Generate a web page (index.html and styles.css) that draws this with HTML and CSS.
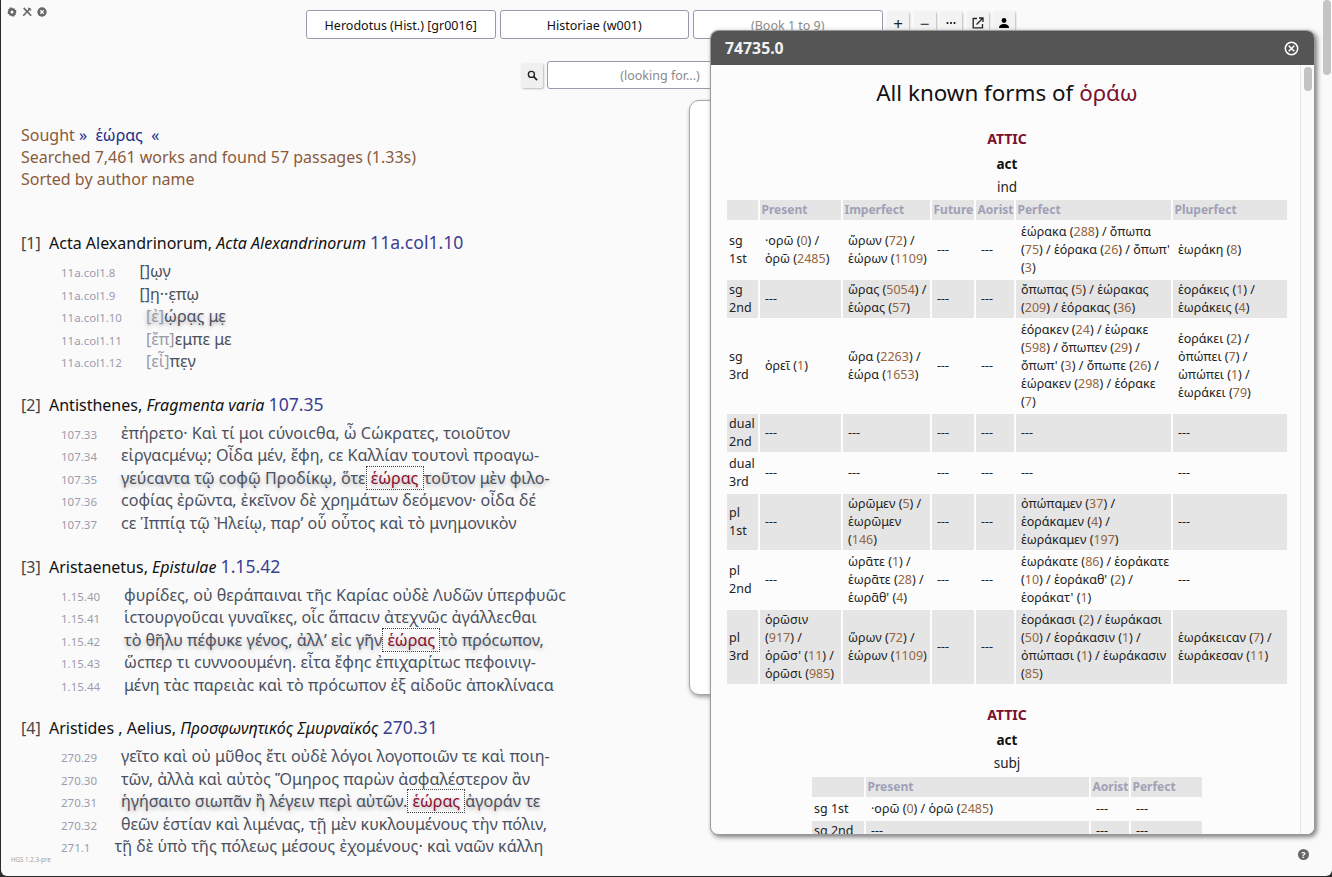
FILE: index.html
```html
<!DOCTYPE html>
<html lang="en">
<head>
    <meta charset="UTF-8">
    <meta name="viewport" content="width=device-width, initial-scale=1.0">
    <title>Hipparchia</title>
    <link rel="stylesheet" href="styles.css">
</head>
<body>
<div class="page">
    <div class="corner-icons">
        <svg viewBox="0 0 12 12" width="10" height="10"><path d="M6 0.5l1.2 1.4 1.8-.5.5 1.8 1.8.6-.5 1.8L11.5 6l-1.2 1.4.5 1.8-1.8.6-.5 1.8-1.8-.5L6 11.5l-1.2-1.4-1.8.5-.5-1.8-1.8-.6.5-1.8L.5 6l1.2-1.4-.5-1.8 1.8-.6.5-1.8 1.8.5z" fill="#666"/><circle cx="6" cy="6" r="1.8" fill="#fafafa"/></svg>
        <svg viewBox="0 0 12 12" width="10" height="10"><path d="M2 1l9 9.5M10 1.5L1.5 10.5" stroke="#666" stroke-width="2" fill="none"/><path d="M8 .5l3.5 3-1.5 1-3-3z" fill="#666"/></svg>
        <svg viewBox="0 0 12 12" width="10" height="10"><circle cx="6" cy="6" r="5.6" fill="#666"/><path d="M4 4l4 4M8 4l-4 4" stroke="#fafafa" stroke-width="1.6"/></svg>
    </div>

    <div class="topbar">
        <div class="picker">Herodotus (Hist.) [gr0016]</div>
        <div class="picker">Historiae (w001)</div>
        <div class="picker muted">(Book 1 to 9)</div>
        <div class="tools">
            <div class="tool">+</div>
            <div class="tool">&minus;</div>
            <div class="tool"><svg viewBox="0 0 12 12" width="12" height="12"><circle cx="2.5" cy="6" r="1"/><circle cx="6" cy="6" r="1"/><circle cx="9.5" cy="6" r="1"/></svg></div>
            <div class="tool"><svg viewBox="0 0 12 12" width="12" height="12"><path d="M5 1.5H1.2v9.3h9.3V7" fill="none" stroke="#222" stroke-width="1.3"/><path d="M4.5 7.5L10.5 1.5M7 1h4v4" fill="none" stroke="#222" stroke-width="1.3"/></svg></div>
            <div class="tool"><svg viewBox="0 0 12 12" width="12" height="12"><circle cx="6" cy="3.5" r="2.4"/><path d="M1 11c0-3 2.5-4 5-4s5 1 5 4z"/></svg></div>
        </div>
    </div>

    <div class="searchbar">
        <div class="search-btn"><svg viewBox="0 0 12 12" width="11" height="11"><circle cx="4.8" cy="4.8" r="3.3" fill="none" stroke="#222" stroke-width="1.5"/><path d="M7.3 7.3l3.7 3.7" stroke="#222" stroke-width="1.8"/></svg></div>
        <div class="search-input">(looking for...)</div>
    </div>

    <div class="summary">
        <div>Sought <span class="sought">&raquo;&nbsp; ἑώρας &nbsp;&laquo;</span></div>
        <div>Searched 7,461 works and found 57 passages (1.33s)</div>
        <div>Sorted by author name</div>
    </div>

    <div class="results">
        <div class="entry">
            <div class="entry-head"><span class="idx">[1]</span>Acta Alexandrinorum, <i>Acta Alexandrinorum</i> <span class="cite">11a.col1.10</span></div>
            <div class="line"><span class="num">11a.col1.8</span>[]ω̣ν̣</div>
            <div class="line"><span class="num">11a.col1.9</span>[]η̣··ε̣πω̣</div>
            <div class="line focus"><span class="num">11a.col1.10</span><span class="lost">[ἐ]</span>ώ̣ρα̣ς̣ με̣</div>
            <div class="line"><span class="num">11a.col1.11</span><span class="lost">[ἔπ]</span>εμπε με</div>
            <div class="line"><span class="num">11a.col1.12</span><span class="lost">[εἶ]</span>πε̣ν̣</div>
        </div>
        <div class="entry">
            <div class="entry-head"><span class="idx">[2]</span>Antisthenes, <i>Fragmenta varia</i> <span class="cite">107.35</span></div>
            <div class="line"><span class="num">107.33</span>ἐπήρετο· Καὶ τί μοι ϲύνοιϲθα, ὦ Ϲώκρατες, τοιοῦτον</div>
            <div class="line"><span class="num">107.34</span>εἰργαϲμένῳ; Οἶδα μέν, ἔφη, ϲε Καλλίαν τουτονὶ προαγω-</div>
            <div class="line focus"><span class="num">107.35</span>γεύϲαντα τῷ ϲοφῷ Προδίκῳ, ὅτε<span class="hit"> ἑώρας </span>τοῦτον μὲν φιλο-</div>
            <div class="line"><span class="num">107.36</span>ϲοφίας ἐρῶντα, ἐκεῖνον δὲ χρημάτων δεόμενον· οἶδα δέ</div>
            <div class="line"><span class="num">107.37</span>ϲε Ἱππίᾳ τῷ Ἠλείῳ, παρ’ οὗ οὗτος καὶ τὸ μνημονικὸν</div>
        </div>
        <div class="entry">
            <div class="entry-head"><span class="idx">[3]</span>Aristaenetus, <i>Epistulae</i> <span class="cite">1.15.42</span></div>
            <div class="line"><span class="num">1.15.40</span>φυρίδες, οὐ θεράπαιναι τῆϲ Καρίαϲ οὐδὲ Λυδῶν ὑπερφυῶϲ</div>
            <div class="line"><span class="num">1.15.41</span>ἱϲτουργοῦϲαι γυναῖκες, οἷϲ ἅπαϲιν ἀτεχνῶϲ ἀγάλλεϲθαι</div>
            <div class="line focus"><span class="num">1.15.42</span>τὸ θῆλυ πέφυκε γένος, ἀλλ’ εἰϲ γῆν<span class="hit"> ἑώρας </span>τὸ πρόϲωπον,</div>
            <div class="line"><span class="num">1.15.43</span>ὥϲπερ τι ϲυννοουμένη. εἶτα ἔφηϲ ἐπιχαρίτωϲ πεφοινιγ-</div>
            <div class="line"><span class="num">1.15.44</span>μένη τὰϲ παρειὰϲ καὶ τὸ πρόϲωπον ἐξ αἰδοῦϲ ἀποκλίναϲα</div>
        </div>
        <div class="entry">
            <div class="entry-head"><span class="idx">[4]</span>Aristides , Aelius, <i>Προσφωνητικός Σμυρναϊκός</i> <span class="cite">270.31</span></div>
            <div class="line"><span class="num">270.29</span>γεῖτο καὶ οὐ μῦθος ἔτι οὐδὲ λόγοι λογοποιῶν τε καὶ ποιη-</div>
            <div class="line"><span class="num">270.30</span>τῶν, ἀλλὰ καὶ αὐτὸς Ὅμηρος παρὼν ἀσφαλέστερον ἂν</div>
            <div class="line focus"><span class="num">270.31</span>ἡγήσαιτο σιωπᾶν ἢ λέγειν περὶ αὐτῶν.<span class="hit"> ἑώρας </span>ἀγοράν τε</div>
            <div class="line"><span class="num">270.32</span>θεῶν ἑστίαν καὶ λιμένας, τῇ μὲν κυκλουμένους τὴν πόλιν,</div>
            <div class="line"><span class="num">271.1</span>τῇ δὲ ὑπὸ τῆς πόλεως μέσους ἐχομένους· καὶ ναῶν κάλλη</div>
        </div>
    </div>

    <div class="version">HGS 1.2.3-pre</div>
    <div class="help">?</div>
    <div class="scroll-thumb"></div>
    <div class="back-panel"></div>

    <div class="dialog">
        <div class="dialog-head">
            <span>74735.0</span>
            <svg viewBox="0 0 16 16" width="15" height="15"><circle cx="8" cy="8" r="6.6" fill="none" stroke="#fff" stroke-width="1.6"/><path d="M5 5l6 6M11 5l-6 6" stroke="#fff" stroke-width="1.6"/></svg>
        </div>
        <div class="dialog-body">
            <div class="forms-title">All known forms of <span class="lemma">ὁράω</span></div>

            <div class="dialect">ATTIC</div>
            <div class="voice">act</div>
            <div class="mood">ind</div>
            <table class="forms wide">
                <colgroup><col class="c-a"><col class="c-b"><col class="c-c"><col class="c-d"><col class="c-e"><col class="c-f"><col class="c-g"></colgroup>
                <tr class="alt"><th></th><th>Present</th><th>Imperfect</th><th>Future</th><th>Aorist</th><th>Perfect</th><th>Pluperfect</th></tr>
                <tr><td class="pers">sg 1st</td><td>·ορῶ (<b>0</b>) / ὁρῶ (<b>2485</b>)</td><td>ὥρων (<b>72</b>) / ἑώρων (<b>1109</b>)</td><td>---</td><td>---</td><td>ἑώρακα (<b>288</b>) / ὄπωπα (<b>75</b>) / ἑόρακα (<b>26</b>) / ὄπωπ' (<b>3</b>)</td><td>ἑωράκη (<b>8</b>)</td></tr>
                <tr class="alt"><td class="pers">sg 2nd</td><td>---</td><td>ὥρας (<b>5054</b>) / ἑώρας (<b>57</b>)</td><td>---</td><td>---</td><td>ὄπωπας (<b>5</b>) / ἑώρακας (<b>209</b>) / ἑόρακας (<b>36</b>)</td><td>ἑοράκεις (<b>1</b>) / ἑωράκεις (<b>4</b>)</td></tr>
                <tr><td class="pers">sg 3rd</td><td>ὁρεῖ (<b>1</b>)</td><td>ὥρα (<b>2263</b>) / ἑώρα (<b>1653</b>)</td><td>---</td><td>---</td><td>ἑόρακεν (<b>24</b>) / ἑώρακε (<b>598</b>) / ὄπωπεν (<b>29</b>) / ὄπωπ' (<b>3</b>) / ὄπωπε (<b>26</b>) / ἑώρακεν (<b>298</b>) / ἑόρακε (<b>7</b>)</td><td>ἑοράκει (<b>2</b>) / ὀπώπει (<b>7</b>) / ὠπώπει (<b>1</b>) / ἑωράκει (<b>79</b>)</td></tr>
                <tr class="alt"><td class="pers">dual 2nd</td><td>---</td><td>---</td><td>---</td><td>---</td><td>---</td><td>---</td></tr>
                <tr><td class="pers">dual 3rd</td><td>---</td><td>---</td><td>---</td><td>---</td><td>---</td><td>---</td></tr>
                <tr class="alt"><td class="pers">pl 1st</td><td>---</td><td>ὡρῶμεν (<b>5</b>) / ἑωρῶμεν (<b>146</b>)</td><td>---</td><td>---</td><td>ὀπώπαμεν (<b>37</b>) / ἑοράκαμεν (<b>4</b>) / ἑωράκαμεν (<b>197</b>)</td><td>---</td></tr>
                <tr><td class="pers">pl 2nd</td><td>---</td><td>ὡρᾶτε (<b>1</b>) / ἑωρᾶτε (<b>28</b>) / ἑωρᾶθ' (<b>4</b>)</td><td>---</td><td>---</td><td>ἑωράκατε (<b>86</b>) / ἑοράκατε (<b>10</b>) / ἑοράκαθ' (<b>2</b>) / ἑοράκατ' (<b>1</b>)</td><td>---</td></tr>
                <tr class="alt"><td class="pers">pl 3rd</td><td>ὁρῶσιν (<b>917</b>) / ὁρῶσ' (<b>11</b>) / ὁρῶσι (<b>985</b>)</td><td>ὥρων (<b>72</b>) / ἑώρων (<b>1109</b>)</td><td>---</td><td>---</td><td>ἑοράκασι (<b>2</b>) / ἑωράκασι (<b>50</b>) / ἑοράκασιν (<b>1</b>) / ὀπώπασι (<b>1</b>) / ἑωράκασιν (<b>85</b>)</td><td>ἑωράκειϲαν (<b>7</b>) / ἑωράκεσαν (<b>11</b>)</td></tr>
            </table>

            <div class="dialect second">ATTIC</div>
            <div class="voice">act</div>
            <div class="mood">subj</div>
            <table class="forms narrow">
                <colgroup><col class="d-a"><col class="d-b"><col class="d-c"><col class="d-d"></colgroup>
                <tr class="alt"><th></th><th>Present</th><th>Aorist</th><th>Perfect</th></tr>
                <tr><td class="pers">sg 1st</td><td>·ορῶ (<b>0</b>) / ὁρῶ (<b>2485</b>)</td><td>---</td><td>---</td></tr>
                <tr class="alt"><td class="pers">sg 2nd</td><td>---</td><td>---</td><td>---</td></tr>
            </table>
            <div class="inner-track"></div>
            <div class="inner-thumb"></div>
        </div>
    </div>
</div>
</body>
</html>
```

FILE: styles.css
```css
* {
    box-sizing: border-box;
}

html, body {
    margin: 0;
    height: 877px;
    overflow: hidden;
}

body {
    background-color: #2b2b2b;
    font-family: "Noto Sans", sans-serif;
}

.page {
    position: relative;
    height: 876px;
    margin-left: 1px;
    padding-top: 10px;
    background-color: #fafafa;
    border-radius: 0 0 6px 6px;
    overflow: hidden;
}

.corner-icons {
    position: absolute;
    top: 7px;
    left: 6px;
    display: flex;
    gap: 5px;
}

/* top pickers */
.topbar {
    display: flex;
    gap: 4px;
    padding-left: 305px;
}

.picker {
    width: 189.5px;
    height: 29px;
    line-height: 29px;
    text-align: center;
    font-size: 12.5px;
    color: #111;
    background-color: #fff;
    border: 1px solid #9a98ae;
    border-radius: 3px;
}

.picker.muted,
.search-input {
    color: #8a8a8a;
}

.tools {
    display: flex;
    gap: 4.5px;
    margin-left: 0.5px;
}

.tool {
    display: flex;
    align-items: center;
    justify-content: center;
    width: 22px;
    height: 24px;
    margin-top: 1px;
    font-size: 17px;
    color: #222;
    background-color: #f3f3f3;
    border-radius: 2px;
    box-shadow: 1px 1px 2px #bbb;
}

.searchbar {
    display: flex;
    gap: 4px;
    margin-top: 22px;
    padding-left: 520px;
}

.search-btn {
    display: flex;
    align-items: center;
    justify-content: center;
    width: 22px;
    height: 25px;
    margin-top: 2px;
    background-color: #f0f0f0;
    border-radius: 2px;
    box-shadow: 1px 1px 2px #bbb;
}

.search-input {
    width: 226px;
    height: 28px;
    line-height: 28px;
    text-align: center;
    font-size: 12.5px;
    background-color: #fff;
    border: 1px solid #9a98ae;
    border-radius: 3px;
}

/* search results */
.summary {
    margin-top: 35px;
    padding-left: 20px;
    font-size: 16px;
    line-height: 22px;
    color: #8a5a3c;
}

.sought {
    color: #1e2a8a;
}

.results {
    margin-top: 42px;
    padding-left: 20px;
}

.entry {
    margin-bottom: 21.25px;
}

.entry-head {
    height: 22px;
    font-size: 16px;
    line-height: 22px;
    margin-bottom: 6px;
    color: #111;
}

.idx {
    display: inline-block;
    width: 28px;
    color: #444;
}

.cite {
    font-size: 17.6px;
    line-height: 1;
    color: #3a3f94;
}

.line {
    padding-left: 40px;
    font-size: 16.1px;
    line-height: 22.5px;
    height: 22.5px;
    white-space: nowrap;
    color: #4b5160;
}

.line.focus {
    text-shadow: 0 2px 4px rgba(0, 0, 0, 0.3);
}

.num {
    display: inline-block;
    margin-right: 24px;
    font-size: 11.5px;
    color: #9c9cad;
    text-shadow: none;
}

.lost {
    color: #9a9aa6;
}

.hit {
    border: 1px dotted #444;
    color: #8a0f2e;
}

.version {
    position: absolute;
    left: 10px;
    bottom: 12px;
    font-size: 6.2px;
    color: #a0a0a0;
}

.help {
    position: absolute;
    right: 23px;
    bottom: 16px;
    width: 11px;
    height: 11px;
    line-height: 11px;
    text-align: center;
    font-size: 9px;
    font-weight: bold;
    color: #fff;
    background-color: #666;
    border-radius: 50%;
}

.scroll-thumb {
    position: absolute;
    top: 0;
    right: 1px;
    width: 8px;
    height: 75px;
    background-color: #c4c4c4;
    border-radius: 4px;
}

.back-panel {
    position: absolute;
    top: 100px;
    left: 688px;
    width: 560px;
    height: 595px;
    background-color: #fff;
    border: 1px solid #a8a8a8;
    border-radius: 10px;
    box-shadow: 1px 2px 4px #999;
}

/* the morphology window */
.dialog {
    position: absolute;
    top: 30px;
    left: 709px;
    width: 605px;
    height: 805px;
    background-color: #fcfcfc;
    border: 1px solid #999;
    border-radius: 8px;
    box-shadow: 2px 2px 5px #777;
    overflow: hidden;
}

.dialog-head {
    display: flex;
    align-items: center;
    justify-content: space-between;
    height: 34px;
    padding: 0 15px 0 14px;
    font-size: 15.8px;
    font-weight: bold;
    color: #f2f2f2;
    background-color: #555;
}

.dialog-body {
    position: relative;
    padding: 13px 15px 0 4px;
    text-align: center;
}

.forms-title {
    font-size: 22.4px;
    line-height: 30px;
    margin-bottom: 19px;
    color: #111;
}

.lemma {
    color: #7a1030;
}

.dialect {
    font-size: 14px;
    font-weight: bold;
    line-height: 24px;
    color: #7a1030;
}

.dialect.second {
    margin-top: 17px;
}

.voice {
    font-size: 13.5px;
    font-weight: bold;
    line-height: 26px;
    color: #111;
}

.mood {
    font-size: 13.5px;
    line-height: 21px;
    color: #222;
}

.forms {
    margin: 0 auto;
    table-layout: fixed;
    border-spacing: 2px;
    font-size: 12.5px;
    line-height: 18px;
    text-align: left;
    color: #222;
}

.forms.wide {
    width: 564px;
}

.forms.narrow {
    width: 394px;
    margin-top: 1px;
}

.c-a { width: 31px; }
.c-b { width: 81px; }
.c-c { width: 87px; }
.c-d { width: 42px; }
.c-e { width: 38px; }
.c-f { width: 155px; }
.c-g { width: 114px; }

.d-a { width: 52px; }
.d-b { width: 223px; }
.d-c { width: 38px; }
.d-d { width: 71px; }

.forms tr.alt th,
.forms tr.alt td {
    background-color: #e5e5e5;
}

.forms th {
    height: 20px;
    padding: 0 1.5px;
    font-size: 12px;
    font-weight: bold;
    color: #a0a0b6;
}

.forms td {
    padding: 1px 1px 1px 5px;
}

.forms td.pers {
    padding-left: 2px;
}

.forms b {
    font-weight: normal;
    color: #96663f;
}

.inner-track {
    position: absolute;
    top: 0;
    right: 0;
    width: 14px;
    height: 770px;
    background-color: #fafafa;
    border-left: 1px solid #e6e6e6;
}

.inner-thumb {
    position: absolute;
    top: 2px;
    right: 2px;
    width: 8px;
    height: 24px;
    background-color: #c4c4c4;
    border-radius: 4px;
}
```
